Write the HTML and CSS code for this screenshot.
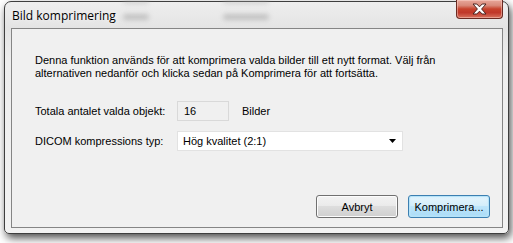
FILE: index.html
```html
<!DOCTYPE html>
<html lang="sv">
<head>
<meta charset="utf-8">
<title>Bild komprimering</title>
<link rel="stylesheet" href="styles.css">
</head>
<body>
<div class="window">
  <div class="titlebar">
    <span class="glass g1"></span>
    <span class="glass g2"></span>
    <span class="glass g3"></span>
    <span class="glass g4"></span>
    <span class="title">Bild komprimering</span>
    <div class="close">
      <svg width="15" height="12" viewBox="0 0 15 12">
        <polygon points="1,1 4.8,1 7.5,3.8 10.2,1 14,1 9.6,6 14,11 10.2,11 7.5,8.2 4.8,11 1,11 5.4,6" fill="#fff" stroke="#4a2420" stroke-width="1" stroke-linejoin="round"/>
      </svg>
    </div>
  </div>
  <div class="client">
    <p class="intro">Denna funktion används för att komprimera valda bilder till ett nytt format. Välj från<br>alternativen nedanför och klicka sedan på Komprimera för att fortsätta.</p>
    <div class="form">
      <div class="row">
        <span class="label">Totala antalet valda objekt:</span>
        <div class="count">16</div>
        <span class="unit">Bilder</span>
      </div>
      <div class="row">
        <span class="label">DICOM kompressions typ:</span>
        <div class="select">
          <span>Hög kvalitet (2:1)</span>
          <svg class="arrow" width="7" height="4" viewBox="0 0 7 4"><polygon points="0,0 7,0 3.5,4" fill="#000"/></svg>
        </div>
      </div>
    </div>
    <div class="buttons">
      <button class="btn">Avbryt</button>
      <button class="btn default">Komprimera...</button>
    </div>
  </div>
</div>
</body>
</html>
```
FILE: styles.css
```css
html, body {
  margin: 0;
  padding: 0;
}
body {
  width: 513px;
  height: 243px;
  overflow: hidden;
  background: #ffffff;
  font-family: "Liberation Sans", Arial, sans-serif;
  font-size: 11px;
  color: #000;
}
.window {
  position: relative;
  margin: 1px 0 0 4px;
  width: 505px;
  height: 233px;
  box-sizing: border-box;
  border: 1px solid #3e3e3e;
  border-radius: 7px 7px 5px 5px;
  background: linear-gradient(#eeeeee, #e4e4e4 26px, #eeeeee 60px, #f2f2f2);
  box-shadow: 2px 4px 8px rgba(0, 0, 0, 0.7);
  padding: 0 5px 5px 6px;
  display: flex;
  flex-direction: column;
}
.titlebar {
  position: relative;
  height: 26px;
  display: flex;
  align-items: center;
}
.title {
  position: relative;
  padding: 1px 0 0 1px;
  font-family: "Open Sans", "Noto Sans", sans-serif;
  font-size: 12px;
  color: #000;
  text-shadow: 0 0 6px rgba(255, 255, 255, 0.9);
}
.glass {
  position: absolute;
  height: 6px;
  background: #a8a8a8;
  filter: blur(2.5px);
  opacity: 0.6;
  border-radius: 3px;
}
.g1 { left: 112px; top: 12px; width: 26px; }
.g2 { left: 112px; top: -4px; width: 26px; opacity: 0.35; }
.g3 { left: 212px; top: 12px; width: 46px; }
.g4 { left: 212px; top: -4px; width: 46px; opacity: 0.35; }
.close {
  position: absolute;
  right: 0;
  top: -2px;
  width: 47px;
  height: 19px;
  box-sizing: border-box;
  border: 1px solid #6b2a22;
  border-top: none;
  border-radius: 0 0 4px 4px;
  background: linear-gradient(#e8a79a, #d98a7a 30%, #c7422c 50%, #c0382a 70%, #d8735e);
  box-shadow: inset 0 0 0 1px rgba(255, 220, 210, 0.45);
  display: flex;
  align-items: center;
  justify-content: center;
}
.client {
  flex: 1;
  border: 1px solid #858585;
  background: #f0f0f0;
  display: flex;
  flex-direction: column;
  padding: 0 12px 9px 23px;
}
.intro {
  margin: 25px 0 0 0;
  line-height: 13px;
  white-space: nowrap;
}
.form {
  margin-top: 21px;
  display: flex;
  flex-direction: column;
  gap: 10px;
}
.row {
  display: flex;
  align-items: center;
  height: 20px;
}
.label {
  width: 142px;
  flex: none;
}
.count {
  width: 52px;
  height: 20px;
  box-sizing: border-box;
  border: 1px solid #d9d9d9;
  background: #f0f0f0;
  padding-left: 6px;
  display: flex;
  align-items: center;
}
.unit {
  margin-left: 13px;
}
.select {
  width: 226px;
  height: 20px;
  box-sizing: border-box;
  border: 1px solid #e2e2e2;
  background: #ffffff;
  padding: 0 6px 0 5px;
  display: flex;
  align-items: center;
  justify-content: space-between;
}
.buttons {
  margin-top: auto;
  display: flex;
  justify-content: flex-end;
  gap: 10px;
}
.btn {
  width: 82px;
  height: 23px;
  box-sizing: border-box;
  border: 1px solid #707070;
  border-radius: 3px;
  background: linear-gradient(#f2f2f2, #ebebeb 45%, #dddddd 50%, #cfcfcf);
  box-shadow: inset 0 0 0 1px #fcfcfc;
  font-family: inherit;
  font-size: 11px;
  color: #000;
  padding: 0;
}
.btn.default {
  border-color: #3c7fb1;
  background: linear-gradient(#e5f4fc, #d4eefb 45%, #bde5fb 50%, #a9dbf6);
  box-shadow: inset 0 0 0 1px #b6e3f8, inset 0 0 2px 1px #c4ecfd;
}
```
